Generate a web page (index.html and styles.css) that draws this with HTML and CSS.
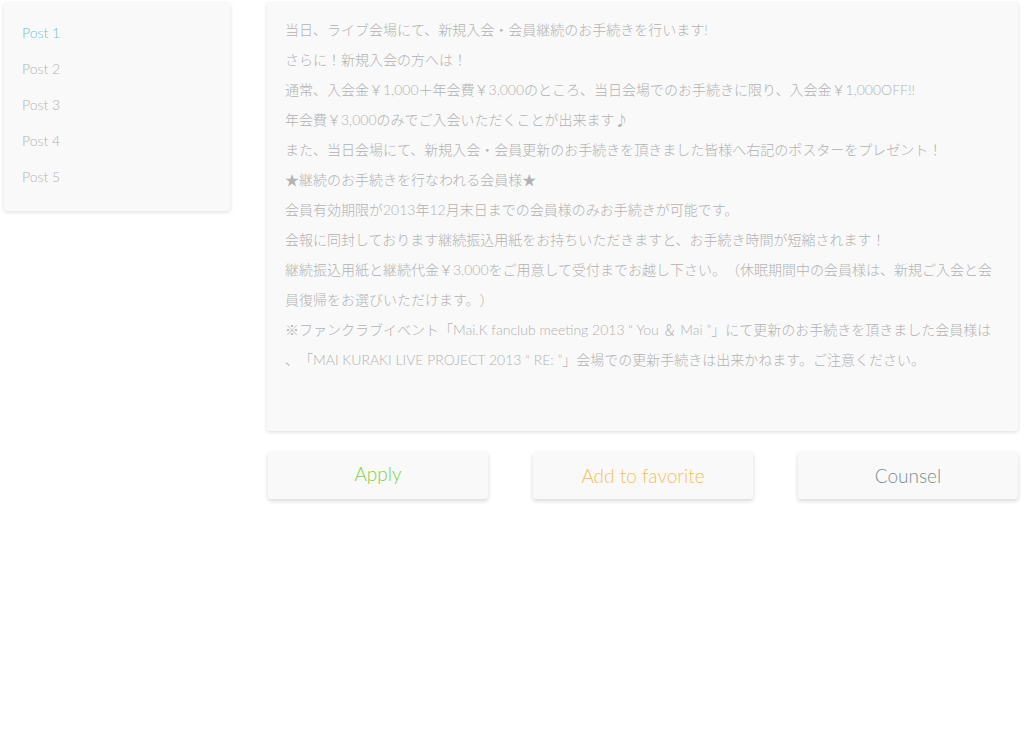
FILE: index.html
```html
<!DOCTYPE html>
<html lang="ja">
<head>
<meta charset="utf-8">
<title>Posts</title>
<link rel="stylesheet" href="styles.css">
</head>
<body>
<div class="layout">
  <nav class="sidebar card">
    <a class="post active">Post 1</a>
    <a class="post">Post 2</a>
    <a class="post">Post 3</a>
    <a class="post">Post 4</a>
    <a class="post">Post 5</a>
  </nav>
  <main class="main">
    <article class="content card">
      <p>当日、ライブ会場にて、新規入会・会員継続のお手続きを行います!</p>
      <p>さらに！新規入会の方へは！</p>
      <p>通常、入会金￥1,000＋年会費￥3,000のところ、当日会場でのお手続きに限り、入会金￥1,000OFF!!</p>
      <p>年会費￥3,000のみでご入会いただくことが出来ます♪</p>
      <p>また、当日会場にて、新規入会・会員更新のお手続きを頂きました皆様へ右記のポスターをプレゼント！</p>
      <p>★継続のお手続きを行なわれる会員様★</p>
      <p>会員有効期限が2013年12月末日までの会員様のみお手続きが可能です。</p>
      <p>会報に同封しております継続振込用紙をお持ちいただきますと、お手続き時間が短縮されます！</p>
      <p>継続振込用紙と継続代金￥3,000をご用意して受付までお越し下さい。（休眠期間中の会員様は、新規ご入会と会員復帰をお選びいただけます。）</p>
      <p>※ファンクラブイベント「Mai.K fanclub meeting 2013 “ You ＆ Mai ”」にて更新のお手続きを頂きました会員様は、「MAI KURAKI LIVE PROJECT 2013 “ RE: ”」会場での更新手続きは出来かねます。ご注意ください。</p>
    </article>
    <div class="actions">
      <button class="btn btn-apply">Apply</button>
      <button class="btn btn-fav">Add to favorite</button>
      <button class="btn btn-counsel">Counsel</button>
    </div>
  </main>
</div>
</body>
</html>
```
FILE: styles.css
```css
html, body {
  margin: 0;
  padding: 0;
  background: #ffffff;
}
body {
  font-family: Lato, "Noto Sans CJK JP", sans-serif;
  font-weight: 300;
}
.layout {
  display: flex;
  align-items: flex-start;
  gap: 37px;
  padding: 3px 6px 20px 4px;
}
.card {
  background: #f9f9f9;
  border-radius: 3px;
  box-shadow: 0 1px 4px rgba(0, 0, 0, 0.14);
}
.sidebar {
  width: 226px;
  flex: none;
  box-sizing: border-box;
  padding: 12px 18px 16px;
  display: flex;
  flex-direction: column;
}
.post {
  display: block;
  font-size: 14px;
  line-height: 36px;
  color: #b3b3b3;
  cursor: pointer;
}
.post.active {
  color: #6cc4d6;
}
.main {
  flex: 1;
  min-width: 0;
  display: flex;
  flex-direction: column;
}
.content {
  padding: 12px 20px 56px 18px;
  font-family: Lato, "Noto Sans CJK JP", sans-serif;
  font-size: 14px;
  line-height: 30px;
  color: #b3b3b3;
  line-break: anywhere;
  text-spacing-trim: space-all;
}
.content p {
  margin: 0;
}
.actions {
  display: flex;
  justify-content: space-between;
  margin-top: 21px;
  padding: 0 0 8px 1px;
}
.btn {
  -webkit-appearance: none;
  appearance: none;
  display: block;
  width: 220px;
  height: 47px;
  border: none;
  border-radius: 3px;
  outline: none;
  background: #f9f9f9;
  box-shadow: 0 2px 4px rgba(0, 0, 0, 0.16);
  font-family: Lato, sans-serif;
  font-weight: 300;
  font-size: 19px;
  cursor: pointer;
  padding: 0 0 1px;
}
.btn-apply {
  color: #7fd147;
  padding-bottom: 4px;
}
.btn-fav {
  color: #f6bf5e;
}
.btn-counsel {
  color: #7a9092;
}
```
